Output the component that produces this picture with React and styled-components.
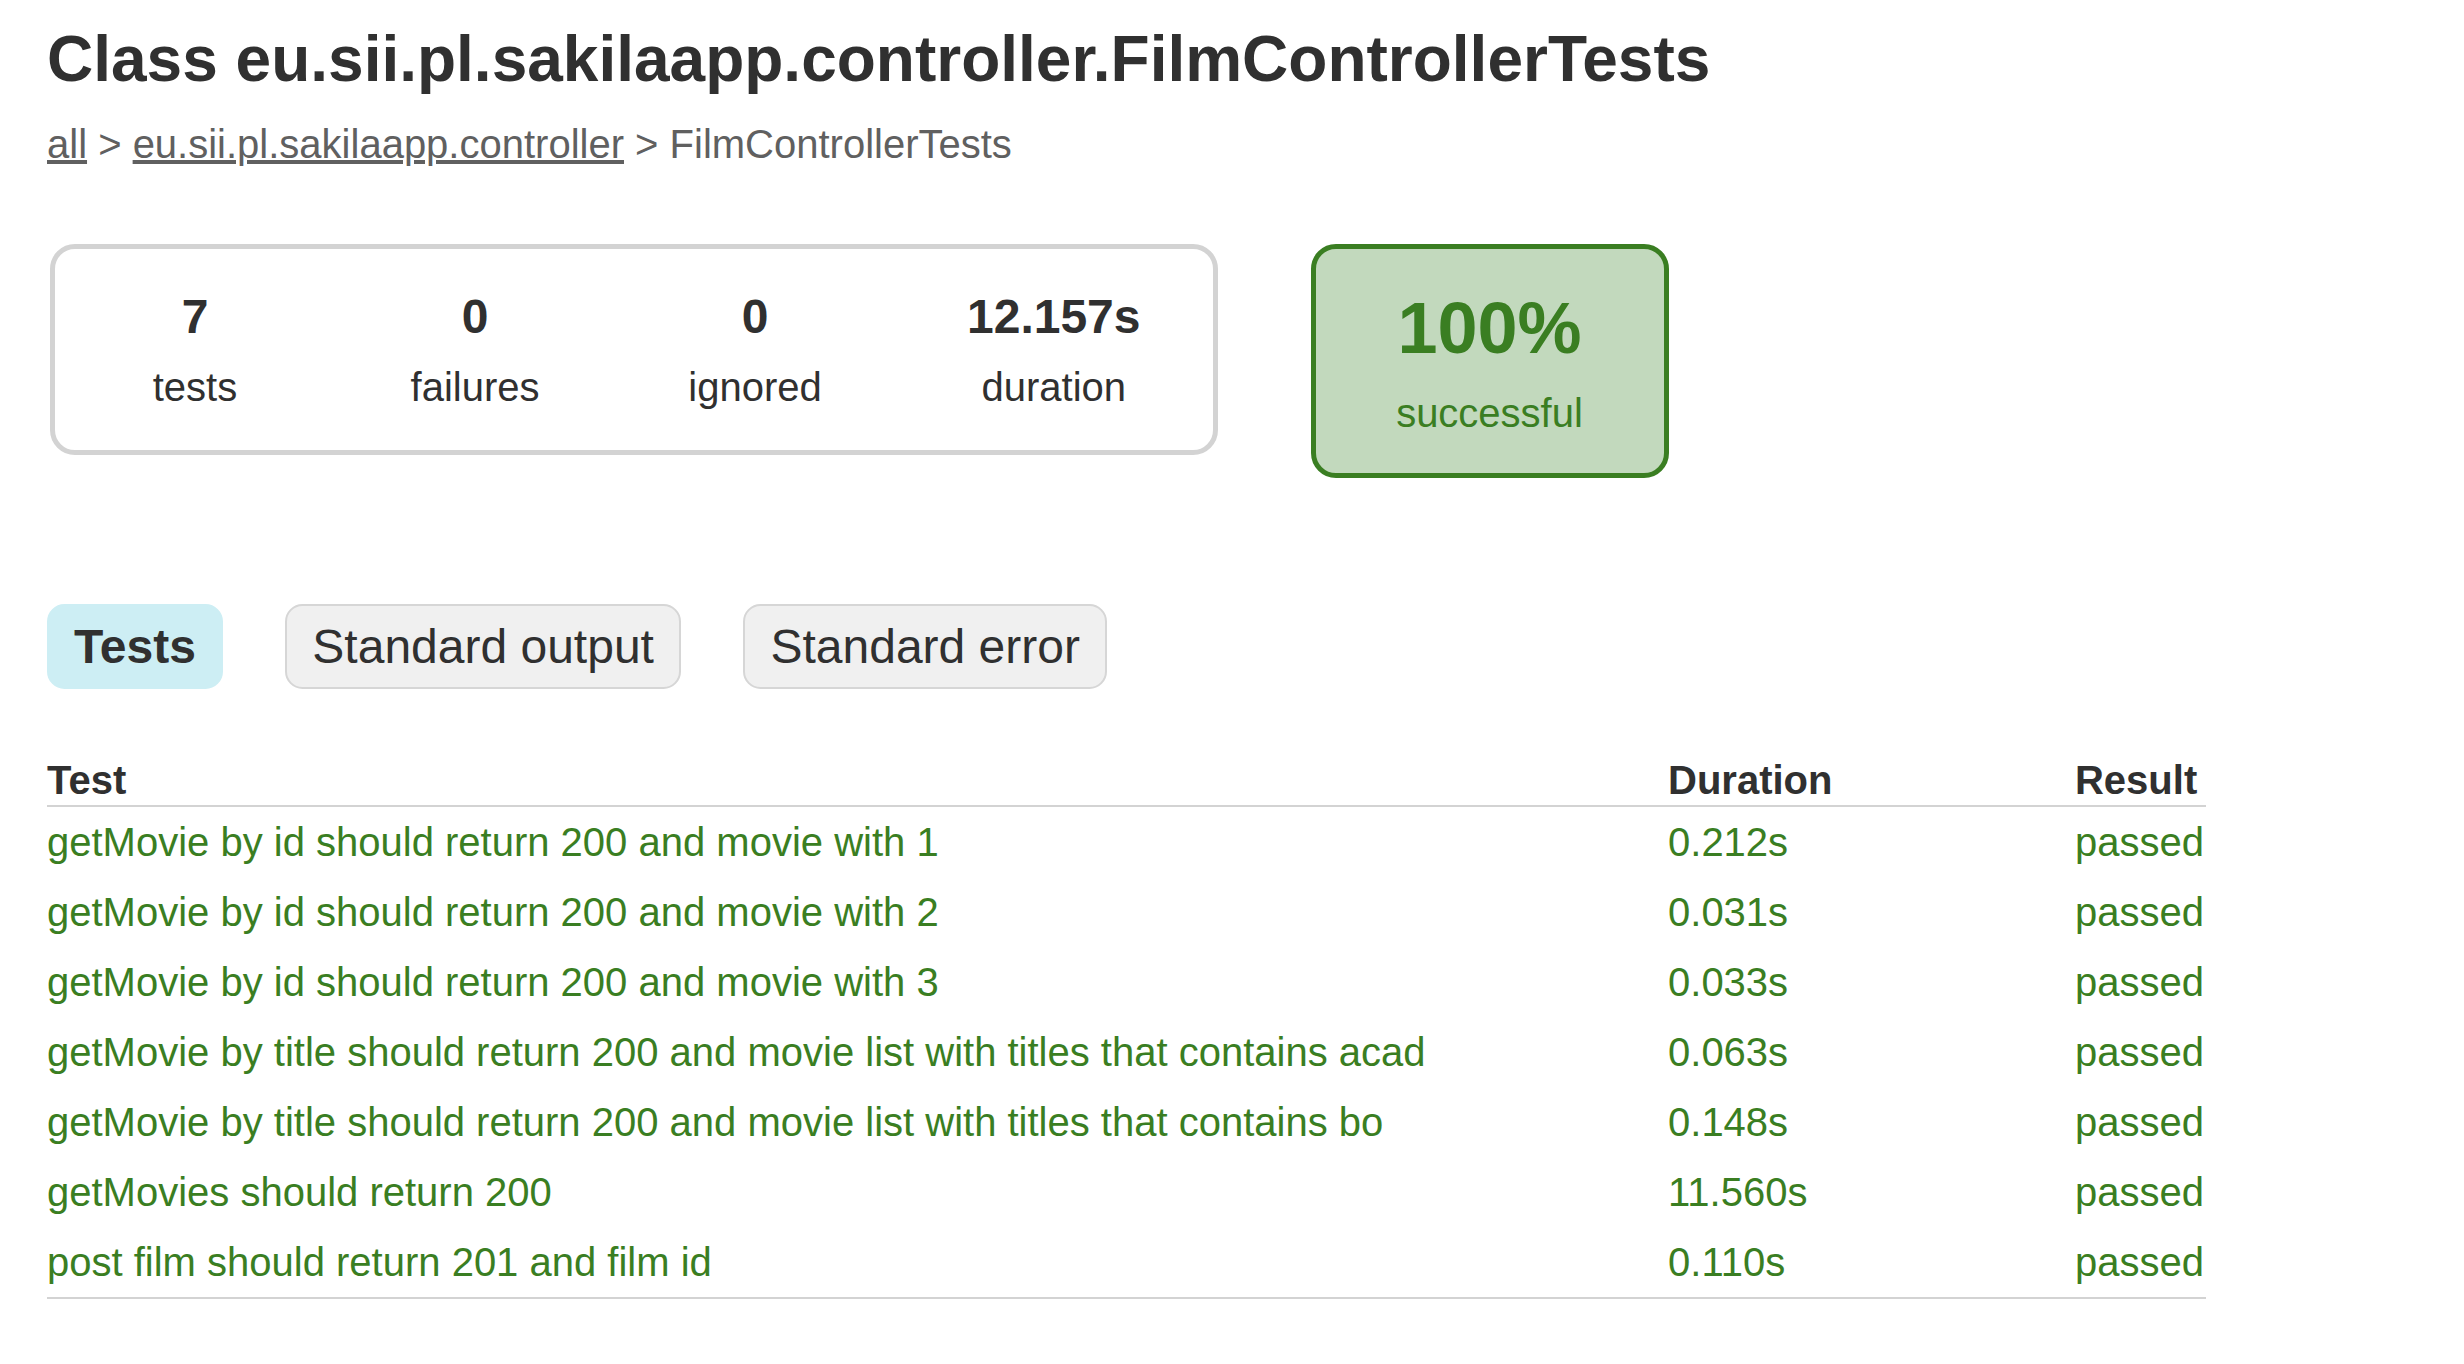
import React from 'react';
import styled, { createGlobalStyle } from 'styled-components';

const GlobalStyle = createGlobalStyle`
  html, body {
    margin: 0;
    padding: 0;
    background: #ffffff;
  }
  body {
    font-family: "Liberation Sans", Helvetica, Arial, sans-serif;
    font-size: 40px;
    color: #303030;
  }
`;

const Content = styled.div`
  padding: 23px 47px 40px 47px;
`;

const Title = styled.h1`
  font-size: 64px;
  font-weight: bold;
  line-height: 73.5px;
  margin: 0 0 24px 0;
  white-space: nowrap;
`;

const Breadcrumbs = styled.div`
  color: #606060;
  line-height: 46px;
  white-space: nowrap;
`;

const Crumb = styled.a`
  color: #606060;
  text-decoration: underline;
  cursor: pointer;
`;

const Summary = styled.div`
  display: flex;
  align-items: flex-start;
  margin-top: 77.5px;
  padding: 0 2.5px;
`;

const SummaryGroup = styled.div`
  display: flex;
  padding: 2.5px 0.5px;
  border: 5px solid #d3d3d3;
  border-radius: 25px;
`;

const InfoBox = styled.div`
  width: ${p => p.$wide ? '317.5px' : '280px'};
  padding: 37.5px 0;
  text-align: center;
`;

const Counter = styled.div`
  font-size: 48px;
  font-weight: bold;
  line-height: 55px;
  margin-bottom: 20px;
`;

const Label = styled.p`
  margin: 0;
  line-height: 46px;
`;

const SuccessRate = styled.div`
  width: 348px;
  margin-left: 92.5px;
  padding: 37.5px 0;
  text-align: center;
  color: #3a7e22;
  background: #c2d9bd;
  border: 5px solid #3a7e22;
  border-radius: 25px;
`;

const Percent = styled.div`
  font-size: 72px;
  font-weight: bold;
  line-height: 83px;
  margin-bottom: 20px;
`;

const TabLinks = styled.ul`
  display: flex;
  list-style: none;
  margin: 101px 0 40px 0;
  padding: 25px 0;
`;

const TabItem = styled.li`
  padding: 13px 25px;
  margin-right: 62.5px;
  border: 2px solid ${p => p.$selected ? '#cdeef4' : '#d6d6d6'};
  border-radius: 17.5px;
  background: ${p => p.$selected ? '#cdeef4' : '#f0f0f0'};
`;

const TabLink = styled.a`
  display: block;
  font-size: 48px;
  line-height: 55px;
  font-weight: ${p => p.$selected ? 'bold' : 'normal'};
  color: #303030;
  text-decoration: none;
  cursor: pointer;
`;

const Table = styled.table`
  border-collapse: collapse;
  border-bottom: 2px solid #d3d3d3;
  margin-top: 1px;
`;

const Th = styled.th`
  text-align: left;
  white-space: nowrap;
  font-weight: bold;
  line-height: 46px;
  padding: 2.5px 2.5px 2.5px ${p => p.$first ? '0' : '240px'};
  border-bottom: 2px solid #d3d3d3;
`;

const Td = styled.td`
  white-space: nowrap;
  line-height: 46px;
  color: #3a7e22;
  padding: 12px 2.5px 12px ${p => p.$first ? '0' : '240px'};
`;

const tests = [
  ['getMovie by id should return 200 and movie with 1', '0.212s'],
  ['getMovie by id should return 200 and movie with 2', '0.031s'],
  ['getMovie by id should return 200 and movie with 3', '0.033s'],
  ['getMovie by title should return 200 and movie list with titles that contains acad', '0.063s'],
  ['getMovie by title should return 200 and movie list with titles that contains bo', '0.148s'],
  ['getMovies should return 200', '11.560s'],
  ['post film should return 201 and film id', '0.110s'],
];

const stats = [
  { value: '7', label: 'tests' },
  { value: '0', label: 'failures' },
  { value: '0', label: 'ignored' },
  { value: '12.157s', label: 'duration', wide: true },
];

const App = () => {
  return (
    <>
      <GlobalStyle />
      <Content>
        <Title>Class eu.sii.pl.sakilaapp.controller.FilmControllerTests</Title>
        <Breadcrumbs>
          <Crumb>all</Crumb> &gt; <Crumb>eu.sii.pl.sakilaapp.controller</Crumb> &gt; FilmControllerTests
        </Breadcrumbs>

        <Summary>
          <SummaryGroup>
            {stats.map(s => (
              <InfoBox key={s.label} $wide={s.wide}>
                <Counter>{s.value}</Counter>
                <Label>{s.label}</Label>
              </InfoBox>
            ))}
          </SummaryGroup>
          <SuccessRate>
            <Percent>100%</Percent>
            <Label>successful</Label>
          </SuccessRate>
        </Summary>

        <TabLinks>
          <TabItem $selected><TabLink $selected>Tests</TabLink></TabItem>
          <TabItem><TabLink>Standard output</TabLink></TabItem>
          <TabItem><TabLink>Standard error</TabLink></TabItem>
        </TabLinks>

        <Table>
          <thead>
            <tr>
              <Th $first>Test</Th>
              <Th>Duration</Th>
              <Th>Result</Th>
            </tr>
          </thead>
          <tbody>
            {tests.map(([name, time]) => (
              <tr key={name}>
                <Td $first>{name}</Td>
                <Td>{time}</Td>
                <Td>passed</Td>
              </tr>
            ))}
          </tbody>
        </Table>
      </Content>
    </>
  );
};

export default App;
